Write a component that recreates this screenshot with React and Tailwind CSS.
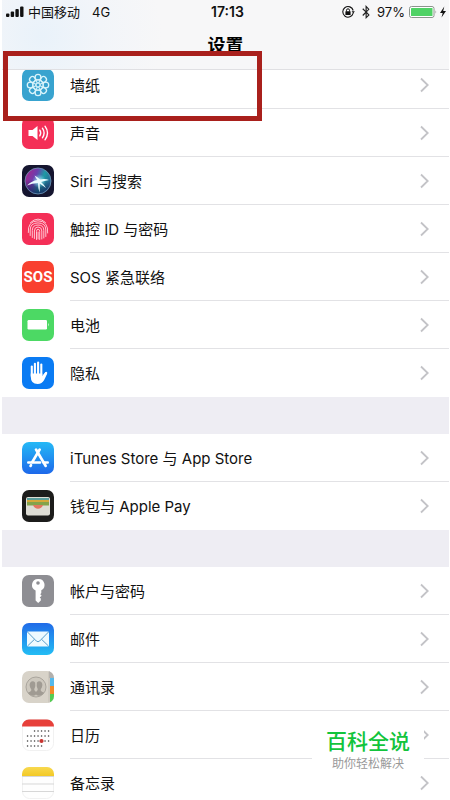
import { FaBluetoothB } from "react-icons/fa";

const petals = [0, 45, 90, 135, 180, 225, 270, 315];

const WallpaperIcon = () => (
  <svg viewBox="0 0 32 32" className="size-8 shrink-0">
    <rect width="32" height="32" rx="7" fill="#38a3cf" />
    <g fill="none" stroke="#d9f4fb" strokeWidth="1.3">
      {petals.map((angle) => (
        <g key={angle} transform={`rotate(${angle} 16 16)`}>
          <circle cx="16" cy="8.200" r="2.900" />
          <ellipse cx="16" cy="12.200" rx="1.700" ry="1.800" strokeWidth="0.800" />
        </g>
      ))}
      <circle cx="16" cy="16" r="2" strokeWidth="1" />
    </g>
  </svg>
);

const SoundIcon = () => (
  <svg viewBox="0 0 32 32" className="size-8 shrink-0">
    <rect width="32" height="32" rx="7" fill="#f42f57" />
    <path d="M6.5 13h4l5-4v14l-5-4h-4z" fill="#fff" />
    <g fill="none" stroke="#fff" strokeWidth="1.4" strokeLinecap="round">
      <path d="M17.8 13.2q1.8 2.8 0 5.6" />
      <path d="M20.4 11.2q3.4 4.8 0 9.6" />
      <path d="M23 9.2q5 6.8 0 13.6" />
    </g>
  </svg>
);

const SiriIcon = () => (
  <svg viewBox="0 0 32 32" className="size-8 shrink-0">
    <defs>
      <linearGradient id="siriOrb" x1="0" y1="0.3" x2="1" y2="0.7">
        <stop offset="0" stopColor="#a5258e" />
        <stop offset="0.35" stopColor="#6b3fae" />
        <stop offset="0.62" stopColor="#1f9aa4" />
        <stop offset="1" stopColor="#285b92" />
      </linearGradient>
      <linearGradient id="siriShade" x1="0" y1="0" x2="0" y2="1">
        <stop offset="0.45" stopColor="#14163c" stopOpacity="0" />
        <stop offset="1" stopColor="#101e58" stopOpacity="0.8" />
      </linearGradient>
      <radialGradient id="siriGlow">
        <stop offset="0" stopColor="#fff" />
        <stop offset="0.35" stopColor="#bdf3ff" stopOpacity="0.6" />
        <stop offset="1" stopColor="#7adcff" stopOpacity="0" />
      </radialGradient>
    </defs>
    <rect width="32" height="32" rx="7" fill="#15152f" />
    <circle cx="16" cy="16" r="13" fill="url(#siriOrb)" />
    <circle cx="16" cy="16" r="13" fill="url(#siriShade)" stroke="#6f96b8" strokeWidth="0.8" />
    <circle cx="17" cy="16" r="7" fill="url(#siriGlow)" />
    <path
      d="M5 20.500Q10 15.500 15.500 15Q13.500 12.500 12.500 10.500Q15.500 12 18 14.500Q23 13.500 27 15Q22 16 19 17Q22 19.500 24 23Q20.500 20.500 17.700 18.500Q18 23 17.500 27.500Q16 23 16 18Q10 18 5 20.500z"
      fill="#eafcff"
    />
  </svg>
);

const TouchIdIcon = () => (
  <svg viewBox="0 0 32 32" className="size-8 shrink-0">
    <rect width="32" height="32" rx="7" fill="#f42f57" />
    <g fill="none" stroke="#ffc6d2" strokeWidth="1" strokeLinecap="round">
      <path d="M8.500 9.500Q16 2.500 23.500 9.500" />
      <path d="M6.300 19.500Q5.500 8 16 7.800Q26.500 8 25.700 20" />
      <path d="M8.200 22.500V17Q8.200 10 16 9.900Q23.800 10 23.800 17V23.500" />
      <path d="M10.300 24.500V17.500Q10.300 12 16 12Q21.800 12 21.800 17.500V25" />
      <path d="M12.400 25.500V18Q12.400 14 16 14Q19.800 14 19.800 18V26" />
      <path d="M14.500 26.500V18.500Q14.500 16.200 16 16.200Q17.700 16.200 17.700 18.500V26.500" />
      <path d="M16.100 19V26" />
    </g>
  </svg>
);

const SosIcon = () => (
  <span className="flex size-8 shrink-0 items-center justify-center rounded-[7px] bg-[#f9402f] font-['Liberation_Sans_Narrow','Roboto',sans-serif] text-[15px] leading-4 font-bold text-white">
    SOS
  </span>
);

const BatteryIcon = () => (
  <svg viewBox="0 0 32 32" className="size-8 shrink-0">
    <rect width="32" height="32" rx="7" fill="#4cd964" />
    <rect x="5.500" y="11" width="19.500" height="9.500" rx="1.200" fill="#fff" />
    <path d="M26 13.800q1.400 1.900 0 3.800z" fill="#fff" />
  </svg>
);

const PrivacyIcon = () => (
  <svg viewBox="0 0 32 32" className="size-8 shrink-0">
    <rect width="32" height="32" rx="7" fill="#0a7bf3" />
    <g fill="none" stroke="#fff" strokeWidth="2.100" strokeLinecap="round">
      <path d="M9.800 19V9.500" />
      <path d="M12.900 17V6.800" />
      <path d="M16.100 17V5.600" />
      <path d="M19.300 18V7.500" />
      <path d="M20.800 20.500L24.200 15.800" />
    </g>
    <path
      d="M8.750 16.500H20.300V19L23.500 15L25.200 16.500Q23.700 20 22 23.300Q20 27 15.600 27Q8.750 27 8.750 19.500z"
      fill="#fff"
    />
  </svg>
);

const StoreIcon = () => (
  <svg viewBox="0 0 32 32" className="size-8 shrink-0">
    <defs>
      <linearGradient id="storeBg" x1="0" y1="0" x2="0" y2="1">
        <stop offset="0" stopColor="#25b9f6" />
        <stop offset="1" stopColor="#1d68ea" />
      </linearGradient>
    </defs>
    <rect width="32" height="32" rx="7" fill="url(#storeBg)" />
    <g fill="none" stroke="#fff" strokeWidth="2.600" strokeLinecap="round">
      <path d="M17.700 7.500L10.300 20" />
      <path d="M14 7.500L23.700 24" />
      <path d="M6.300 20.500H18" />
      <path d="M21.500 20.500H25.700" />
      <path d="M9 23.200L8.500 24" />
    </g>
  </svg>
);

const WalletIcon = () => (
  <svg viewBox="0 0 32 32" className="size-8 shrink-0">
    <rect width="32" height="32" rx="7" fill="#1c1c1b" />
    <rect x="4" y="7" width="24" height="18.500" rx="2" fill="#deddd5" />
    <rect x="5" y="8" width="22" height="3" fill="#5a9c9b" />
    <rect x="5" y="10" width="22" height="3" fill="#d5a83b" />
    <rect x="5" y="12" width="22" height="3.500" fill="#83a34b" />
    <path d="M11 15Q12.500 18.800 16 18.800Q19.500 18.800 21 15z" fill="#e37661" />
  </svg>
);

const KeyIcon = () => (
  <svg viewBox="0 0 32 32" className="size-8 shrink-0">
    <rect width="32" height="32" rx="7" fill="#8e8e93" />
    <path
      d="M16 4A6 6 0 0 0 13.600 15.500V25.500L16.200 28L18.800 25.500V23.600L17.700 22.500L19.700 20.800L18.300 19.300L19.300 18.100V15.300A6 6 0 0 0 16 4z"
      fill="#fff"
    />
    <circle cx="16" cy="8" r="1.800" fill="#8e8e93" />
  </svg>
);

const MailIcon = () => (
  <svg viewBox="0 0 32 32" className="size-8 shrink-0">
    <defs>
      <linearGradient id="mailBg" x1="0" y1="0" x2="0" y2="1">
        <stop offset="0" stopColor="#216be8" />
        <stop offset="1" stopColor="#23bdf4" />
      </linearGradient>
    </defs>
    <rect width="32" height="32" rx="7" fill="url(#mailBg)" />
    <rect x="5" y="8.500" width="22" height="15" rx="1.200" fill="#eefaff" />
    <path
      d="M5.500 9L14.300 18Q16 19.500 17.700 18L26.500 9M5.500 23L12.500 16.300M26.500 23L19.500 16.300"
      fill="none"
      stroke="#5a9fcb"
      strokeWidth="1"
    />
  </svg>
);

const ContactsIcon = () => (
  <svg viewBox="0 0 32 32" className="size-8 shrink-0">
    <defs>
      <clipPath id="contactsClip">
        <rect width="32" height="32" rx="7" />
      </clipPath>
    </defs>
    <g clipPath="url(#contactsClip)">
      <rect width="32" height="32" fill="#d8d3c9" />
      <path d="M27 0h5v7h-5z" fill="#b2b0ad" />
      <path d="M28 7h4v8h-4z" fill="#55b9ec" />
      <path d="M28 15h4v8h-4z" fill="#f18a2b" />
      <path d="M28 23h4v9h-4z" fill="#53cc52" />
      <path d="M27 0v32" stroke="#bdb8ae" strokeWidth="0.800" />
    </g>
    <circle cx="14" cy="16" r="10" fill="#cdc8be" stroke="#aaa59d" strokeWidth="1" />
    <g fill="#a09b93">
      <path d="M6 21.500Q9.700 20.500 9.300 18.500Q6.500 14 8.300 11.500Q10.700 9 13.300 11.700Q14.200 15 12.200 18.300Q12.200 20.300 15 21.500Q13.500 25.300 10.500 24.700Q7.500 24 6 21.500z" />
      <path d="M22 21.500Q18.300 20.500 18.700 18.500Q21.500 14 19.700 11.500Q17.300 9 14.700 11.700Q13.800 15 15.800 18.300Q15.800 20.300 13 21.500Q14.500 25.300 17.500 24.700Q20.500 24 22 21.500z" />
    </g>
    <path d="M14 10.500V17" stroke="#cdc8be" strokeWidth="0.800" />
  </svg>
);

const calendarDots = [
  { y: 12, xs: [12.5, 16, 19.5, 23, 26.5] },
  { y: 17, xs: [5.5, 9, 12.5, 16, 19.5, 23, 26.5] },
  { y: 22, xs: [5.5, 9, 12.5, 16, 19.5, 23, 26.5] },
  { y: 27, xs: [5.5, 9, 12.5, 16, 19.5] },
];

const CalendarIcon = () => (
  <svg viewBox="0 0 32 32" className="size-8 shrink-0">
    <rect x="0.500" y="0.500" width="31" height="31" rx="7" fill="#fff" stroke="#f1f1f1" />
    <path d="M0 7.500A7 7 0 0 1 7 0.500H25A7 7 0 0 1 32 7.500z" fill="#e7403a" />
    {calendarDots.map(({ y, xs }) =>
      xs.map((x) => (
        <rect key={`${x}-${y}`} x={x - 0.6} y={y - 0.7} width="1.300" height="1.400" fill="#4a4a4a" />
      ))
    )}
    <circle cx="19.500" cy="22" r="2.100" fill="#c8342f" />
  </svg>
);

const NotesIcon = () => (
  <svg viewBox="0 0 32 32" className="size-8 shrink-0">
    <defs>
      <linearGradient id="notesTop" x1="0" y1="0" x2="0" y2="1">
        <stop offset="0" stopColor="#f8d94f" />
        <stop offset="1" stopColor="#f3c926" />
      </linearGradient>
    </defs>
    <rect x="0.500" y="0.500" width="31" height="31" rx="7" fill="#fefefe" stroke="#f1f1f1" />
    <path d="M0 9V7A7 7 0 0 1 7 0H25A7 7 0 0 1 32 7V9z" fill="url(#notesTop)" />
    <path d="M0 9.500H32M0 17H32M0 24.500H32" stroke="#d7d7d7" strokeWidth="1" />
  </svg>
);

const groups = [
  [
    { label: "墙纸", Icon: WallpaperIcon },
    { label: "声音", Icon: SoundIcon },
    { label: "Siri 与搜索", Icon: SiriIcon },
    { label: "触控 ID 与密码", Icon: TouchIdIcon },
    { label: "SOS 紧急联络", Icon: SosIcon },
    { label: "电池", Icon: BatteryIcon },
    { label: "隐私", Icon: PrivacyIcon },
  ],
  [
    { label: "iTunes Store 与 App Store", Icon: StoreIcon },
    { label: "钱包与 Apple Pay", Icon: WalletIcon },
  ],
  [
    { label: "帐户与密码", Icon: KeyIcon },
    { label: "邮件", Icon: MailIcon },
    { label: "通讯录", Icon: ContactsIcon },
    { label: "日历", Icon: CalendarIcon },
    { label: "备忘录", Icon: NotesIcon },
  ],
];

const StatusBar = () => (
  <div className="grid h-6 grid-cols-[1fr_auto_1fr] items-center pl-1 text-sm text-[#111]">
    <div className="flex items-center">
      <svg viewBox="0 0 18 12" className="mr-1 h-3 w-[18px]" fill="#111">
        <rect x="0" y="7.500" width="3.400" height="3.500" rx="1" />
        <rect x="4.700" y="5.500" width="3.400" height="5.500" rx="1" />
        <rect x="9.400" y="3" width="3.400" height="8" rx="1" />
        <rect x="14.100" y="0.500" width="3.400" height="10.500" rx="1" />
      </svg>
      <span className="text-[13px]">中国移动</span>
      <span className="ml-3 text-[13px]">4G</span>
    </div>
    <span className="font-semibold">17:13</span>
    <div className="flex items-center justify-end pr-0.5">
      <svg viewBox="0 0 14 14" className="mr-1.5 size-3.5" fill="none" stroke="#111">
        <path d="M12.200 8.200A5.300 5.300 0 1 1 12.200 5.500" strokeWidth="1.100" />
        <path d="M10.600 6.200H13.800L12.300 8.400z" fill="#111" stroke="none" />
        <rect x="4.400" y="6.300" width="5.200" height="3.700" rx="0.500" fill="#111" stroke="none" />
        <path d="M5.500 6.500V5.300A1.500 1.500 0 0 1 8.500 5.300V6.500" strokeWidth="1" />
      </svg>
      <FaBluetoothB className="mr-1.5 h-3.5 w-2.5 text-[#222]" />
      <span className="mr-1 text-[13px]">97%</span>
      <svg viewBox="0 0 38 14" className="h-3.5 w-[38px]">
        <rect x="0.500" y="1.500" width="24.500" height="11" rx="2" fill="#fff" stroke="#8b948c" />
        <rect x="2" y="3" width="21.500" height="8" rx="0.600" fill="#4fd265" />
        <path d="M26.500 5.200q1.500 1.800 0 3.600z" fill="#8b948c" />
        <path d="M35.300 1.500L31 8H33.700L32.500 12.500L37 6H34.200z" fill="#111" />
      </svg>
    </div>
  </div>
);

const SettingsRow = ({ label, Icon }) => (
  <a href="#" className="group flex h-12 items-stretch pl-5">
    <span className="flex w-12 shrink-0 items-center">
      <Icon />
    </span>
    <span className="flex flex-1 items-center justify-between border-b border-[#e2e2e5] pr-5 group-last:border-transparent">
      <span className="pt-0.5 text-[15px] leading-5 text-[#111]">{label}</span>
      <svg viewBox="0 0 9 16" className="h-4 w-[9px]" fill="none" stroke="#c3c3c7" strokeWidth="1.800">
        <path d="M1 1.500L7.700 8L1 14.500" />
      </svg>
    </span>
  </a>
);

export default function App() {
  return (
    <div className="relative h-screen overflow-hidden bg-white pr-px pl-0.5 font-['Inter','Noto_Sans_CJK_SC',sans-serif]">
      <header className="relative z-10 h-[70px] border-b border-[#e0e0e3] bg-[#f7f7f8] bg-[radial-gradient(circle_at_40px_36px,#e9f2fa_0,#f2f5f9_60px,#f7f7f8_120px)]">
        <StatusBar />
        <h1 className="pt-2 text-center text-lg leading-7 font-semibold text-black">设置</h1>
      </header>

      {/* The list is scrolled slightly under the header */}
      <main className="-mt-[9px] flex flex-col gap-[37px] bg-[#eeedf3]">
        {groups.map((rows) => (
          <nav key={rows[0].label} className="bg-white">
            {rows.map((row) => (
              <SettingsRow key={row.label} {...row} />
            ))}
          </nav>
        ))}
      </main>

      {/* Highlight around the wallpaper row */}
      <div className="absolute top-[51px] left-[3px] z-20 h-[70px] w-[259px] border-5 border-[#a9201c]" />

      <aside className="absolute right-[26px] bottom-6 z-20 bg-white px-3.5 pt-2 pb-1 text-center">
        <p className="text-[21px] leading-7 font-medium text-[#12c43c]">百科全说</p>
        <p className="text-xs leading-4 text-[#999]">助你轻松解决</p>
      </aside>
    </div>
  );
}
